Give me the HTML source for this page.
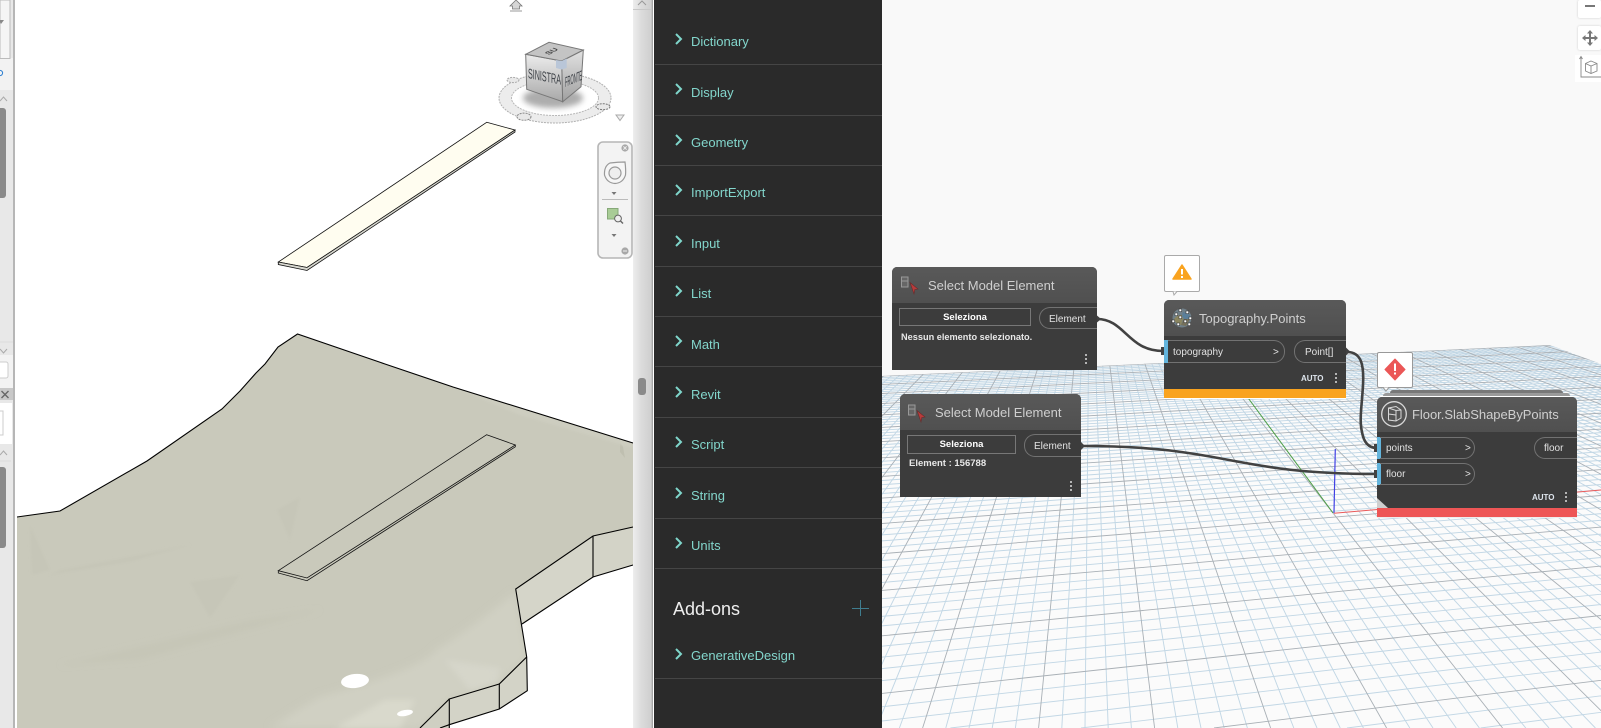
<!DOCTYPE html>
<html><head><meta charset="utf-8"><title>Dynamo</title>
<style>
html,body{margin:0;padding:0;background:#fff;width:1601px;height:728px;overflow:hidden}
#page{position:relative;width:1601px;height:728px;overflow:hidden;font-family:"Liberation Sans",sans-serif;background:#fff}
#page div,#page span{position:absolute;white-space:nowrap;box-sizing:border-box}
#page svg{display:block}
#canvas{left:882px;top:0;width:719px;height:728px;background:#f9f9f9}
.side{left:654px;top:0;width:228px;height:728px;background:#2a2a2a}
.sep{left:655px;width:227px;height:1px;background:#454545}
.it{left:691px;font-size:13px;line-height:16px;color:#83d6cc}
.node{background:#3c3c3c;border-radius:5px 5px 0 0}
.hd{left:0;top:0;background:linear-gradient(#595959,#505050);border-radius:5px 5px 0 0}
.tt{font-size:13px;line-height:16px;color:#cfcfcf}
.pt{font-size:10px;line-height:12px;color:#e2e2e2}
.pill{border:1px solid #727272;height:22px}
.btn{border:1px solid #777;text-align:center;color:#fff;font-weight:bold;font-size:9.5px;line-height:18px}
.auto{font-size:8px;font-weight:bold;color:#dfe6ee;line-height:10px}
.dot{width:2px;height:2px;background:#b5b5b5}
.bar{background:#63b4dc;width:4px}
.tip{background:#fff;border:1px solid #aaa;border-radius:2px}
</style></head><body>
<div id="page">

<div id="canvas"></div>

<svg style="position:absolute;left:0;top:0" width="1601" height="728" viewBox="0 0 1601 728">
 <defs><clipPath id="gc"><polygon points="882,376 1550,345 1601,364 1601,728 882,728"/></clipPath></defs>
 <g clip-path="url(#gc)" fill="none">
  <rect x="882" y="340" width="719" height="388" fill="#fbfbfb" stroke="none"/>
  <path stroke="#c2d7e5" stroke-width=".95" d="M5980 141L1480.6 728M5980 141L1347 728M5980 141L1081 728M5980 141L950.4 728M5980 141L882 721M5980 141L882 706.8M5980 141L882 680.6M5980 141L882 668.6M5980 141L882 657.1M5980 141L882 646.2M5980 141L882 625.9M5980 141L882 616.4M5980 141L882 607.3M5980 141L882 598.7M5980 141L882 582.5M5980 141L882 574.8M5980 141L882 567.5M5980 141L882 560.5M5980 141L882 547.2M5980 141L882 540.9M5980 141L882 534.9M5980 141L882 529.1M5980 141L882 518M5980 141L882 512.8M5980 141L882 507.7M5980 141L882 502.8M5980 141L882 493.5M5980 141L882 489M5980 141L882 484.7M5980 141L882 480.5M5980 141L882 472.5M5980 141L882 468.7M5980 141L882 465M5980 141L882 461.3M5980 141L882 454.4M5980 141L882 451.1M5980 141L882 447.8M5980 141L882 444.7M5980 141L882 438.6M5980 141L882 435.7M5980 141L882 432.9M5980 141L882 430.1M5980 141L882 424.7M5980 141L882 422.2M5980 141L882 419.6M5980 141L882 417.2M5980 141L882 412.4M5980 141L882 410.1M5980 141L882 407.9M5980 141L882 405.7M5980 141L882 401.4M5980 141L882 399.4M5980 141L882 397.4M5980 141L882 395.4M5980 141L882 391.6M5980 141L882 389.7M5980 141L882 387.9M5980 141L882 386.1M5980 141L882 382.7M5980 141L882 381M5980 141L882 379.3M5980 141L882 377.7"/>
  <path stroke="#c2d7e5" stroke-width=".95" d="M1090 205L481.8 728M1090 205L505 728M1090 205L528.2 728M1090 205L551.4 728M1090 205L597.8 728M1090 205L621 728M1090 205L644.2 728M1090 205L667.4 728M1090 205L713.8 728M1090 205L737 728M1090 205L760.2 728M1090 205L783.4 728M1090 205L829.8 728M1090 205L853 728M1090 205L876.2 728M1090 205L899.4 728M1090 205L945.8 728M1090 205L969 728M1090 205L992.2 728M1090 205L1015.4 728M1090 205L1061.8 728M1090 205L1085 728M1090 205L1108.2 728M1090 205L1131.4 728M1090 205L1177.8 728M1090 205L1201 728M1090 205L1224.2 728M1090 205L1247.4 728M1090 205L1293.8 728M1090 205L1317 728M1090 205L1340.2 728M1090 205L1363.4 728M1090 205L1409.8 728M1090 205L1433 728M1090 205L1456.2 728M1090 205L1479.4 728M1090 205L1525.8 728M1090 205L1549 728M1090 205L1572.2 728M1090 205L1595.4 728M1090 205L1641.8 728M1090 205L1665 728M1090 205L1688.2 728M1090 205L1711.4 728M1090 205L1757.8 728M1090 205L1781 728M1090 205L1804.2 728M1090 205L1827.4 728M1090 205L1873.8 728M1090 205L1897 728M1090 205L1920.2 728M1090 205L1943.4 728M1090 205L1989.8 728M1090 205L2013 728M1090 205L2036.2 728M1090 205L2059.4 728M1090 205L2105.8 728M1090 205L2129 728M1090 205L2152.2 728M1090 205L2175.4 728M1090 205L2221.8 728M1090 205L2245 728M1090 205L2268.2 728M1090 205L2291.4 728M1090 205L2337.8 728M1090 205L2361 728M1090 205L2384.2 728M1090 205L2407.4 728M1090 205L2453.8 728M1090 205L2477 728M1090 205L2500.2 728M1090 205L2523.4 728M1090 205L2569.8 728M1090 205L2593 728M1090 205L2616.2 728M1090 205L2639.4 728M1090 205L2685.8 728M1090 205L2709 728M1090 205L2732.2 728M1090 205L2755.4 728"/>
  <path stroke="#a9b0b6" stroke-width=".9" d="M5980 141L1214 728M5980 141L882 693.4M5980 141L882 635.8M5980 141L882 590.4M5980 141L882 553.7M5980 141L882 523.5M5980 141L882 498.1M5980 141L882 476.4M5980 141L882 457.8M5980 141L882 441.6M5980 141L882 427.4M5980 141L882 414.8M5980 141L882 403.5M5980 141L882 393.5M5980 141L882 384.4M5980 141L882 376.1"/>
  <path stroke="#a9b0b6" stroke-width=".9" d="M1090 205L458.6 728M1090 205L574.6 728M1090 205L690.6 728M1090 205L806.6 728M1090 205L922.6 728M1090 205L1038.6 728M1090 205L1154.6 728M1090 205L1270.6 728M1090 205L1386.6 728M1090 205L1502.6 728M1090 205L1618.6 728M1090 205L1734.6 728M1090 205L1850.6 728M1090 205L1966.6 728M1090 205L2082.6 728M1090 205L2198.6 728M1090 205L2314.6 728M1090 205L2430.6 728M1090 205L2546.6 728M1090 205L2662.6 728M1090 205L2778.6 728"/>
 </g>
 <line x1="1240" y1="387" x2="1333" y2="513" stroke="#4f9e48" stroke-width="1"/>
 <line x1="1335.3" y1="449" x2="1334" y2="513" stroke="#4040e4" stroke-width="1.2"/>
 <line x1="1334" y1="513.3" x2="1601" y2="490" stroke="#ea5a5a" stroke-width="1"/>
</svg>

<!-- Revit left -->
<svg style="position:absolute;left:0;top:0" width="654" height="728" viewBox="0 0 654 728">
 <defs>
  <clipPath id="tc"><polygon points="17,517 60,511 147,461 222,409 240,391 256,373 265,364 278,347 297.5,334 385,364 453,387 633,443 633,527 593,536 515.7,589 526.7,657 499.3,684 449.3,699 420,728 17,728"/></clipPath>
  <filter id="b3" x="-30%" y="-30%" width="160%" height="160%"><feGaussianBlur stdDeviation="3"/></filter>
  <filter id="b1" x="-30%" y="-30%" width="160%" height="160%"><feGaussianBlur stdDeviation="1.2"/></filter>
  <filter id="b4" x="-30%" y="-30%" width="160%" height="160%"><feGaussianBlur stdDeviation="4"/></filter>
  <linearGradient id="cl" x1="0" y1="0" x2="0" y2="1"><stop offset="0" stop-color="#ececec"/><stop offset="1" stop-color="#a8a8a8"/></linearGradient>
  <linearGradient id="cr" x1="0" y1="0" x2="0" y2="1"><stop offset="0" stop-color="#e2e2e2"/><stop offset="1" stop-color="#a0a0a0"/></linearGradient>
 </defs>
 <rect x="0" y="0" width="633" height="728" fill="#fff"/>
 <polygon fill="#c9c9bb" points="17,517 60,511 147,461 222,409 240,391 256,373 265,364 278,347 297.5,334 385,364 453,387 633,443 633,527 593,536 515.7,589 526.7,657 499.3,684 449.3,699 420,728 17,728"/>
 <g clip-path="url(#tc)">
  <polygon fill="#c6c6b8" filter="url(#b1)" points="30,525 50,570 32,575"/>
  <polygon fill="#c6c6b8" filter="url(#b1)" points="60,570 190,545 130,562 50,575"/>
  <polygon fill="#c6c6b8" filter="url(#b1)" points="190,582 240,575 210,618"/>
  <polygon fill="#c6c6b8" filter="url(#b1)" points="277,510 300,497 290,540"/>
  <polygon fill="#c6c6b7" filter="url(#b3)" points="60,665 250,620 320,610 140,660"/>
  <polygon fill="#bfbfb0" points="620,441 623,447 625,458 620,452"/>
  <polygon fill="#cdcdc0" filter="url(#b1)" points="453,387 633,443 633,448 520,415"/>
  <path d="M320 697 C380 680 425 665 437 649 C470 630 505 600 515.7 592 L526.7 657 L499.3 684 L449.3 699 L420 728 L270 728 C290 715 305 705 320 697Z" fill="#d0d0c3" filter="url(#b4)"/>
  <path d="M445 660 L500 668 L497 682 L470 690 Z" fill="#d6d6ca" filter="url(#b3)"/>
  <path d="M335 728 L385 700 L415 700 L400 728 Z" fill="#d9d9cc" filter="url(#b3)"/>
 </g>
 <ellipse cx="355" cy="681" rx="14" ry="7" fill="#fff" transform="rotate(-6 355 681)"/>
 <ellipse cx="405" cy="713" rx="8" ry="3" fill="#fff" transform="rotate(-10 405 713)"/>
 <polygon fill="#d3d3c7" points="593,536 633,527 633,565 593,577"/>
 <polygon fill="#d5d5c9" points="515.7,589 593,536 593,577 522,624"/>
 <polygon fill="#d3d3c7" points="526.7,657 527.3,690.7 499.3,709 499.3,684"/>
 <polygon fill="#d3d3c7" points="499.3,684 499.3,709 449.3,724.7 449.3,699"/>
 <polygon fill="#cfcfc2" points="449.3,699 449.3,728 420,728"/>
 <g fill="none" stroke="#000" stroke-width="1.1">
  <polyline points="17,517 60,511 147,461 222,409 240,391 256,373 265,364 278,347 297.5,334 385,364 453,387 633,443"/>
  <polyline points="633,527 593,536 515.7,589 526.7,657 527.3,690.7 499.3,709 449.3,724.7 440,728"/>
  <polyline points="593,536 593,577"/><polyline points="633,565 593,577 522,624"/>
  <polyline points="526.7,657 499.3,684 499.3,709"/><polyline points="499.3,684 449.3,699 449.3,728"/><polyline points="449.3,699 420,728"/>
 </g>
 <g fill="none" stroke="#111" stroke-width=".8">
  <!-- lower slab -->
  <polygon points="486.7,434.7 515.3,445 307,578 278.3,570.7"/>
  <polyline points="278.3,570.7 278.3,573 307,580.7 515.3,446.8 515.3,445"/>
  <!-- upper slab -->
  <polygon points="486.7,122.3 515,130 307,267.5 278.3,262" fill="#fffdf0"/>
  <polygon points="278.3,262 307,267.5 515,130 515,132 307,270.5 278.3,264.5" fill="#d8d8d0"/>
 </g>

 <!-- strip -->
 <rect x="0" y="0" width="13" height="728" fill="#e8e8e8"/>
 <rect x="0" y="58" width="13" height="32" fill="#f2f2f2"/>
 <rect x="0" y="0" width="10" height="58.5" fill="#f5f5f5" stroke="#bbb"/>
 <path d="M-1 20 L1 24 L4 20" fill="#888"/>
 <circle cx="0" cy="73" r="2.6" fill="none" stroke="#2d7fd0"/>
 <path d="M0 101 L3.5 97 L7 101" fill="none" stroke="#aaa"/>
 <rect x="-4" y="108" width="10" height="90" rx="3" fill="#8a8a8a"/>
 <line x1="0" y1="342" x2="13" y2="342" stroke="#ddd"/>
 <path d="M0 349 L3.5 353 L7 349" fill="none" stroke="#aaa"/>
 <rect x="0" y="355" width="13" height="33" fill="#f3f3f3"/>
 <rect x="-2" y="362" width="10" height="16" rx="2" fill="#fff" stroke="#ccc"/>
 <rect x="0" y="388" width="13" height="12" fill="#c8c8c8"/>
 <path d="M1.5 391 L8.5 398 M8.5 391 L1.5 398" stroke="#666" stroke-width="1.4"/>
 <rect x="0" y="403" width="12" height="41" fill="#fff"/>
 <rect x="-3" y="411" width="6" height="24" fill="#fff" stroke="#ccc"/>
 <path d="M0 455 L3.5 451 L7 455" fill="none" stroke="#aaa"/>
 <line x1="0" y1="461" x2="11" y2="461" stroke="#ddd"/>
 <rect x="-4" y="467" width="10" height="81" rx="3" fill="#8a8a8a"/>
 <rect x="13" y="0" width="2" height="728" fill="#b6b6b6"/>
 <rect x="15" y="0" width="2" height="728" fill="#fff"/>

 <!-- view cube -->
 <path d="M516 0 L522 6 L519.5 6 L519.5 9 L512.5 9 L512.5 6 L510 6 L515 1Z" fill="#d6d6d6" stroke="#777" stroke-width=".8"/>
 <line x1="510" y1="11" x2="522" y2="11" stroke="#999"/>
 <ellipse cx="555" cy="98" rx="56" ry="25" fill="#ececec" stroke="#b0b0b0" stroke-dasharray="2 1"/>
 <ellipse cx="555" cy="98" rx="43.5" ry="17.5" fill="#fff" stroke="#b8b8b8" stroke-dasharray="2 1"/>
 <ellipse cx="553" cy="98" rx="30" ry="10" fill="#777" opacity=".6" filter="url(#b3)"/>
 <ellipse cx="524" cy="116.7" rx="7" ry="3.6" fill="#e8e8e8" stroke="#888" stroke-dasharray="2 1"/>
 <ellipse cx="603" cy="106.7" rx="7" ry="3" fill="#e8e8e8" stroke="#777" stroke-dasharray="2 1"/>
 <ellipse cx="513" cy="80" rx="6" ry="2.6" fill="#e8e8e8" stroke="#aaa" stroke-dasharray="2 1"/>
 <path d="M616 115 L624 115 L620 120.5Z" fill="#eee" stroke="#aaa"/>
 <polygon points="525.7,54.3 561.7,61 562.7,101.7 526.7,89.3" fill="url(#cl)" stroke="#777"/>
 <polygon points="561.7,61 583.3,50 581,86.7 562.7,101.7" fill="url(#cr)" stroke="#777"/>
 <polygon points="525.7,54.3 549,42.3 583.3,50 561.7,61" fill="#c4c4c4" stroke="#777"/>
 <polygon points="556,60 561.7,61 566.7,58.5 566.7,68 561.5,69.5 556,68" fill="#b9c6d8"/>
 <text transform="matrix(1,.2,0,1,528,78)" font-family="Liberation Sans" font-size="14" textLength="33" lengthAdjust="spacingAndGlyphs" fill="#3c4046">SINISTRA</text>
 <text transform="matrix(1,-.42,0,1,565,87)" font-family="Liberation Sans" font-size="14" textLength="17" lengthAdjust="spacingAndGlyphs" fill="#3c4046">FRONTE</text>
 <text transform="matrix(.8,-.45,.8,.3,549,55)" font-family="Liberation Sans" font-size="9" font-weight="bold" fill="#444">SU</text>

 <!-- nav bar -->
 <rect x="598" y="142" width="34" height="116" rx="5" fill="#f3f3f3" stroke="#b6b6b6" stroke-width="1.6"/>
 <circle cx="625" cy="148" r="3.6" fill="#a8a8a8"/>
 <path d="M623.4 146.4 L626.6 149.6 M626.6 146.4 L623.4 149.6" stroke="#eee"/>
 <path d="M610 163 Q618 162 625 162 Q626 170 625.5 175 Q623 183 615 183.5 Q607 183 604.5 175 Q604 166 610 163Z" fill="#f6f6f6" stroke="#999" stroke-width="1.2"/>
 <circle cx="615" cy="173" r="6" fill="#eee" stroke="#999" stroke-width="1.2"/>
 <path d="M611.5 192 L616.5 192 L614 195Z" fill="#777"/>
 <line x1="602" y1="199.5" x2="628" y2="199.5" stroke="#bbb"/>
 <rect x="607.5" y="208.5" width="10.5" height="10.5" fill="#a8cc96" stroke="#86a878"/>
 <circle cx="618" cy="218.5" r="3.4" fill="#eee" stroke="#666"/>
 <line x1="620.5" y1="221" x2="623" y2="223.5" stroke="#666" stroke-width="1.4"/>
 <path d="M611.5 234 L616.5 234 L614 237Z" fill="#777"/>
 <circle cx="625" cy="251" r="3.6" fill="#a8a8a8"/>
 <line x1="623" y1="251" x2="627" y2="251" stroke="#eee"/>
</svg>

<!-- divider -->
<div style="left:633px;top:0;width:20px;height:728px;background:linear-gradient(to right,#eee,#dcdcdc 40%,#cfcfcf 90%,#999)"></div>
<div style="left:633px;top:9px;width:18px;height:1px;background:#c8c8c8"></div>
<svg style="position:absolute;left:636px;top:0" width="12" height="6"><path d="M2 5 L6 1 L10 5" fill="none" stroke="#999"/></svg>
<div style="left:637.5px;top:378px;width:8px;height:17px;border-radius:3px;background:#8a8a8a"></div>

<!-- library -->
<div class="side"></div>
<div class="sep" style="top:64px"></div><div class="sep" style="top:115px"></div><div class="sep" style="top:165px"></div><div class="sep" style="top:215px"></div><div class="sep" style="top:266px"></div><div class="sep" style="top:316px"></div><div class="sep" style="top:366px"></div><div class="sep" style="top:417px"></div><div class="sep" style="top:467px"></div><div class="sep" style="top:518px"></div><div class="sep" style="top:568px"></div><div class="sep" style="top:678px"></div>
<svg style="position:absolute;left:670px;top:0" width="20" height="680" fill="none" stroke="#7fd6cb" stroke-width="2">
 <path d="M6 34 L11 39 L6 44"/><path d="M6 84 L11 89 L6 94"/><path d="M6 135 L11 140 L6 145"/><path d="M6 185 L11 190 L6 195"/><path d="M6 236 L11 241 L6 246"/><path d="M6 286 L11 291 L6 296"/><path d="M6 336 L11 341 L6 346"/><path d="M6 387 L11 392 L6 397"/><path d="M6 437 L11 442 L6 447"/><path d="M6 488 L11 493 L6 498"/><path d="M6 538 L11 543 L6 548"/><path d="M6 649 L11 654 L6 659"/>
</svg>
<div class="it" style="top:34px">Dictionary</div>
<div class="it" style="top:85px">Display</div>
<div class="it" style="top:135px">Geometry</div>
<div class="it" style="top:185px">ImportExport</div>
<div class="it" style="top:236px">Input</div>
<div class="it" style="top:286px">List</div>
<div class="it" style="top:337px">Math</div>
<div class="it" style="top:387px">Revit</div>
<div class="it" style="top:437px">Script</div>
<div class="it" style="top:488px">String</div>
<div class="it" style="top:538px">Units</div>
<div style="left:673px;top:598px;font-size:18px;line-height:22px;color:#eee">Add-ons</div>
<div style="left:852px;top:607.5px;width:17px;height:1px;background:#3f7d8f"></div>
<div style="left:860px;top:600px;width:1px;height:16px;background:#3f7d8f"></div>
<div class="it" style="top:648px">GenerativeDesign</div>

<!-- tool buttons -->
<div style="left:1578px;top:0;width:23px;height:18px;background:#fff;border-radius:2px;box-shadow:0 0 2px #ccc"></div>
<div style="left:1585px;top:5px;width:10px;height:2px;background:#777"></div>
<div style="left:1578px;top:26px;width:23px;height:24px;background:#fff;border-radius:2px;box-shadow:0 0 2px #ccc"></div>
<svg style="position:absolute;left:1582px;top:30px" width="16" height="16" fill="#777"><rect x="7" y="2" width="2" height="12"/><rect x="2" y="7" width="12" height="2"/><path d="M8 0 L11 3.5 L5 3.5Z M8 16 L11 12.5 L5 12.5Z M0 8 L3.5 5 L3.5 11Z M16 8 L12.5 5 L12.5 11Z"/></svg>
<div style="left:1575px;top:55px;width:26px;height:27px;background:#fff"></div>
<svg style="position:absolute;left:1577px;top:55px" width="24" height="26" fill="none" stroke="#888" stroke-width=".9"><path d="M4 2 L4 22 L24 22"/><path d="M2.5 4 L4 1.5 L5.5 4"/><path d="M14 6 L20 8.5 L20 16 L14 18.5 L8.5 16 L8.5 8.5Z M8.5 8.5 L14 11 L20 8.5 M14 11 L14 18.5"/></svg>

<!-- connectors -->
<svg style="position:absolute;left:0;top:0" width="1601" height="728" fill="none" stroke="#424242" stroke-width="2.6">
 <path d="M1097 319 C1125 319 1128 351 1163 351"/>
 <path d="M1347 352 C1362 352 1364 366 1363 385 C1362 405 1359 420 1362 432 C1364 444 1370 448 1377 448"/>
 <path d="M1081 446 C1229 446 1229 474 1377 474"/>
 <g fill="#424242" stroke="none">
  <path d="M1097 315.5 L1101 319 L1097 322.5Z"/><path d="M1161 347 L1164 347 L1164 355 L1161 355Z"/>
  <path d="M1346 347.5 L1350 351.5 L1346 355.5Z"/><path d="M1374 444 L1377 444 L1377 452 L1374 452Z"/>
  <path d="M1081 442 L1085 446 L1081 450Z"/><path d="M1374 470 L1377 470 L1377 478 L1374 478Z"/>
 </g>
</svg>

<!-- node 1 -->
<div class="node" style="left:892px;top:267px;width:205px;height:103px">
 <div class="hd" style="width:205px;height:36px"></div>
 <div class="tt" style="left:36px;top:11px">Select Model Element</div>
 <svg style="position:absolute;left:8px;top:8px" width="20" height="20"><rect x="1.5" y="2" width="6.5" height="10" fill="#666" stroke="#999"/><line x1="1.5" y1="6" x2="8" y2="6" stroke="#999"/><path d="M10 7.5 L18 14 L14.8 14.5 L14 19 Z" fill="#b83c3c" stroke="#6b2a2a" stroke-width=".6"/></svg>
 <div class="btn" style="left:7px;top:41px;width:132px;height:18px">Seleziona</div>
 <div class="pill" style="left:147px;top:40px;width:58px;border-right:0;border-radius:11px 0 0 11px"></div>
 <div class="pt" style="left:157px;top:47px">Element</div>
 <div style="left:9px;top:64px;font-size:9.2px;font-weight:bold;line-height:12px;color:#e8e8e8">Nessun elemento selezionato.</div>
 <div class="dot" style="left:193px;top:87px"></div><div class="dot" style="left:193px;top:91px"></div><div class="dot" style="left:193px;top:95px"></div>
</div>

<!-- node 2 -->
<div class="node" style="left:900px;top:394px;width:181px;height:103px">
 <div class="hd" style="width:181px;height:36px"></div>
 <div class="tt" style="left:35px;top:11px">Select Model Element</div>
 <svg style="position:absolute;left:7px;top:9px" width="20" height="20"><rect x="1.5" y="2" width="6.5" height="10" fill="#666" stroke="#999"/><line x1="1.5" y1="6" x2="8" y2="6" stroke="#999"/><path d="M10 7.5 L18 14 L14.8 14.5 L14 19 Z" fill="#b83c3c" stroke="#6b2a2a" stroke-width=".6"/></svg>
 <div class="btn" style="left:7px;top:41px;width:109px;height:19px">Seleziona</div>
 <div class="pill" style="left:124px;top:40px;width:57px;height:23px;border-right:0;border-radius:11px 0 0 11px"></div>
 <div class="pt" style="left:134px;top:47px">Element</div>
 <div style="left:9px;top:64px;font-size:9.5px;font-weight:bold;line-height:12px;color:#e8e8e8">Element : 156788</div>
 <div class="dot" style="left:170px;top:87px"></div><div class="dot" style="left:170px;top:91px"></div><div class="dot" style="left:170px;top:95px"></div>
</div>

<!-- node 3 -->
<div class="tip" style="left:1164px;top:255px;width:36px;height:37px"></div>
<svg style="position:absolute;left:1164px;top:255px" width="36" height="42"><path d="M9 36.5 L10 40 L13 36.5" fill="#fff" stroke="#aaa"/><path d="M18 10 L27 24 L9 24Z" fill="#f9a31f" stroke="#f9a31f" stroke-width="1.5" stroke-linejoin="round"/><rect x="17" y="14" width="2" height="5.5" fill="#fff"/><rect x="17" y="21" width="2" height="2" fill="#fff"/></svg>
<div class="node" style="left:1164px;top:300px;width:182px;height:98px">
 <div class="hd" style="width:182px;height:36px"></div>
 <div class="tt" style="left:35px;top:11px">Topography.Points</div>
 <svg style="position:absolute;left:7px;top:7px" width="22" height="22"><circle cx="11" cy="11" r="9.5" fill="#6f7f88"/><path d="M3 12 Q8 6 13 9 L10 18 Q5 18 3 12Z" fill="#8a8560"/><path d="M12 5 L19 8 L17 14 L11 10Z" fill="#5a7f9a"/><path d="M13 12 L19 12 L15 19 L10 18Z" fill="#75705a"/><g fill="#fff" stroke="#222" stroke-width=".5"><rect x="8" y="2" width="2.6" height="2.6"/><rect x="15" y="4" width="2.6" height="2.6"/><rect x="18" y="10" width="2.6" height="2.6"/><rect x="1" y="13" width="2.6" height="2.6"/><rect x="6" y="16" width="2.6" height="2.6"/><rect x="13" y="13" width="2.6" height="2.6"/><rect x="17" y="16" width="2.6" height="2.6"/><rect x="8" y="9" width="2.6" height="2.6"/><rect x="4" y="6" width="2.6" height="2.6"/></g></svg>
 <div class="bar" style="left:0;top:40px;height:23px"></div>
 <div class="pill" style="left:4px;top:40px;width:117px;height:23px;border-left:0;border-radius:0 11px 11px 0"></div>
 <div class="pt" style="left:9px;top:47px">topography</div>
 <div class="pt" style="left:109px;top:47px">&gt;</div>
 <div class="pill" style="left:130px;top:40px;width:52px;height:23px;border-right:0;border-radius:11px 0 0 11px"></div>
 <div class="pt" style="left:141px;top:47px">Point[]</div>
 <div class="auto" style="left:137px;top:74px">AUTO</div>
 <div class="dot" style="left:171px;top:73px"></div><div class="dot" style="left:171px;top:77px"></div><div class="dot" style="left:171px;top:81px"></div>
 <div style="left:0;top:89px;width:182px;height:9px;background:#f9a31f"></div>
</div>
<div style="left:1164px;top:398px;width:182px;height:1px;background:#fff"></div>

<!-- node 4 -->
<div style="left:1390px;top:390px;width:173px;height:7px;background:#787878;border-radius:3px 3px 0 0"></div>
<div style="left:1383px;top:393px;width:187px;height:3px;background:#9a9a9a;border-radius:3px 3px 0 0"></div>
<div style="left:1380px;top:395.5px;width:197px;height:1.5px;background:#fff"></div>
<div class="tip" style="left:1377px;top:352px;width:36px;height:36px;border-color:#999"></div>
<svg style="position:absolute;left:1377px;top:352px" width="36" height="42"><path d="M6 35.5 L9 39 L12 35.5" fill="#fff" stroke="#999"/><path d="M18 7 L28 17.5 L18 28 L8 17.5Z" fill="#eb5757" stroke="#eb5757" stroke-linejoin="round"/><rect x="17" y="11.5" width="2" height="7.5" fill="#fff"/><rect x="17" y="20.5" width="2" height="2" fill="#fff"/></svg>
<div class="node" style="left:1377px;top:397px;width:200px;height:120px">
 <div class="hd" style="width:200px;height:35px"></div>
 <div class="tt" style="left:35px;top:10px;letter-spacing:-.03px">Floor.SlabShapeByPoints</div>
 <svg style="position:absolute;left:3px;top:3px" width="28" height="28" fill="none" stroke="#d8d8d8"><circle cx="14" cy="14" r="12.3" stroke-width="1.3"/><path d="M8.5 8 L16 6.5 L21 10 L21 18 L16 21 L8.5 20Z M8.5 8 L16 10.5 L21 10 M16 10.5 L16 21 M8.5 14 L16 15" stroke-width="1"/></svg>
 <div class="bar" style="left:0;top:40px;height:22px;width:3.5px"></div>
 <div class="pill" style="left:3px;top:40px;width:95px;border-left:0;border-radius:0 11px 11px 0"></div>
 <div class="pt" style="left:9px;top:46px">points</div>
 <div class="pt" style="left:88px;top:46px">&gt;</div>
 <div class="bar" style="left:0;top:66px;height:22px;width:3.5px"></div>
 <div class="pill" style="left:3px;top:66px;width:95px;border-left:0;border-radius:0 11px 11px 0"></div>
 <div class="pt" style="left:9px;top:72px">floor</div>
 <div class="pt" style="left:88px;top:72px">&gt;</div>
 <div class="pill" style="left:157px;top:40px;width:43px;border-right:0;border-radius:11px 0 0 11px"></div>
 <div class="pt" style="left:167px;top:46px">floor</div>
 <div class="auto" style="left:155px;top:96px">AUTO</div>
 <div class="dot" style="left:188px;top:95px"></div><div class="dot" style="left:188px;top:99px"></div><div class="dot" style="left:188px;top:103px"></div>
 <svg style="position:absolute;left:0;top:101px" width="12" height="10"><path d="M0 0 L11 10 L0 10Z" fill="#cfcfcf"/></svg>
 <div style="left:0;top:111px;width:200px;height:9px;background:#ee5656"></div>
</div>
<div style="left:1377px;top:517px;width:200px;height:1px;background:#eee"></div>

</div>
</body></html>
